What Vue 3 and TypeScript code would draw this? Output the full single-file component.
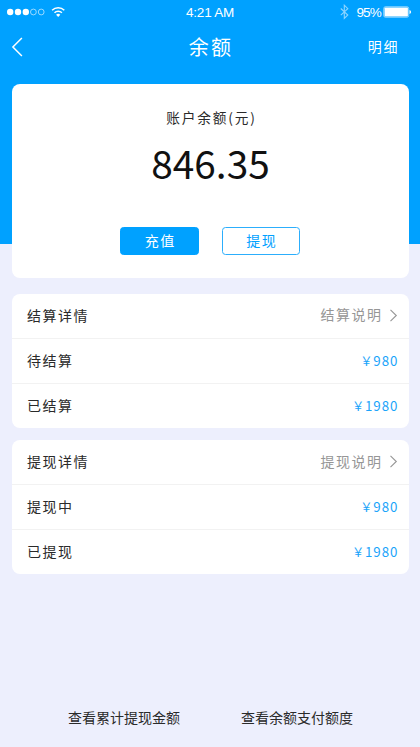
<script setup lang="ts">
interface Row {
  label: string
  amount: string
}
interface Section {
  title: string
  help: string
  rows: Row[]
}

const balance = '846.35'
const sections: Section[] = [
  {
    title: '结算详情',
    help: '结算说明',
    rows: [
      { label: '待结算', amount: '980' },
      { label: '已结算', amount: '1980' },
    ],
  },
  {
    title: '提现详情',
    help: '提现说明',
    rows: [
      { label: '提现中', amount: '980' },
      { label: '已提现', amount: '1980' },
    ],
  },
]
const links: string[] = ['查看累计提现金额', '查看余额支付额度']
</script>

<template>
  <div class="page">
    <div class="status">
      <svg class="signal" width="66" height="14" viewBox="0 0 66 14">
        <g fill="#fff">
          <circle cx="10.2" cy="7" r="3.2" />
          <circle cx="18" cy="7" r="3.2" />
          <circle cx="25.8" cy="7" r="3.2" />
        </g>
        <g fill="none" stroke="#fff" stroke-width="0.7" opacity=".85">
          <circle cx="33.4" cy="7" r="2.9" />
          <circle cx="41.2" cy="7" r="2.9" />
        </g>
        <g fill="none" stroke="#fff" stroke-width="1.5">
          <path d="M52.1 5.2a8.6 8.6 0 0 1 12.2 0" />
          <path d="M54.5 7.8a5.2 5.2 0 0 1 7.4 0" />
        </g>
        <path d="M56.1 9.7a3 3 0 0 1 4.2 0l-2.1 2.3z" fill="#fff" />
      </svg>
      <span class="time">4:21 AM</span>
      <div class="power">
        <svg width="9" height="16" viewBox="0 0 9 16" fill="none" stroke="#fff" stroke-width="1.1" opacity=".55">
          <path d="M.8 4.5l7 6.5-3.5 3.4V1.2l3.5 3.5-7 6.4" />
        </svg>
        <span class="percent">95%</span>
        <svg width="29" height="12" viewBox="0 0 29 12">
          <rect x=".7" y=".7" width="25" height="10.6" rx="1.8" fill="none" stroke="#fff" stroke-width=".8" opacity=".65" />
          <rect x="1.5" y="1.5" width="23.4" height="9" rx=".8" fill="#fff" />
          <path d="M26.5 4.1q1.6.5 1.6 1.9t-1.6 1.9z" fill="#fff" />
        </svg>
      </div>
    </div>

    <header class="nav">
      <svg class="back" width="12" height="20" viewBox="0 0 12 20" fill="none" stroke="#fff" stroke-width="1.5">
        <path d="M10.9 1L1.9 10l9 9" />
      </svg>
      <h1>余额</h1>
      <span class="detail">明细</span>
    </header>

    <section class="card balance">
      <p class="caption">账户余额(元)</p>
      <p class="total">{{ balance }}</p>
      <div class="actions">
        <button class="btn primary">充值</button>
        <button class="btn">提现</button>
      </div>
    </section>

    <section v-for="section in sections" :key="section.title" class="card list">
      <div class="row">
        <span>{{ section.title }}</span>
        <span class="help">
          <span class="help-text">{{ section.help }}</span>
          <svg width="8" height="13" viewBox="0 0 8 13" fill="none" stroke="#969696" stroke-width="1.1">
            <path d="M.5.8l5.8 5.7-5.8 5.7" />
          </svg>
        </span>
      </div>
      <div v-for="row in section.rows" :key="row.label" class="row">
        <span>{{ row.label }}</span>
        <span class="amount"><span class="yen">￥</span>{{ row.amount }}</span>
      </div>
    </section>

    <footer class="links">
      <span v-for="link in links" :key="link">{{ link }}</span>
    </footer>
  </div>
</template>

<style>
body {
  background: #edeffd;
}
</style>

<style scoped>
.page {
  box-sizing: border-box;
  display: flex;
  flex-direction: column;
  height: 747px;
  background: linear-gradient(#00a1ff 244px, #edeffd 244px);
  color: #2a2a2a;
  font-family: 'Noto Sans CJK SC', sans-serif;
  font-size: 14px;
}
.status {
  display: grid;
  grid-template-columns: 1fr auto 1fr;
  align-items: center;
  height: 24px;
  color: #fff;
  font-family: 'Liberation Sans', sans-serif;
  font-size: 13.5px;
}
.signal {
  margin-top: -1px;
}
.time {
  letter-spacing: -0.25px;
}
.power {
  display: flex;
  justify-content: flex-end;
  align-items: center;
  padding-right: 8px;
}
.power svg:first-child {
  margin-right: 1px;
}
.percent {
  margin: 0 2px 0 6px;
  letter-spacing: -0.8px;
}
.nav {
  display: grid;
  grid-template-columns: 1fr auto 1fr;
  align-items: center;
  height: 46px;
  padding: 0 21px 0 11px;
  color: #fff;
}
.nav h1 {
  margin: 0 0 0 12px;
  font-size: 20px;
  font-weight: 400;
  line-height: 30px;
  letter-spacing: 2.3px;
}
.detail {
  justify-self: end;
  margin-top: -2px;
  letter-spacing: 1.6px;
}
.card {
  margin: 0 11.5px;
  background: #fff;
  border-radius: 8px;
}
.balance {
  box-sizing: border-box;
  display: flex;
  flex-direction: column;
  align-items: center;
  height: 194.5px;
  margin-top: 13.5px;
  margin-bottom: 15.5px;
  padding-top: 22px;
}
.caption {
  margin: 0 0 0 3px;
  line-height: 22px;
  font-size: 13.7px;
  letter-spacing: 1.8px;
}
.total {
  margin: 5px 0 0 1px;
  color: #111;
  font-size: 38.8px;
  line-height: 58px;
}
.actions {
  display: flex;
  gap: 23px;
  margin-top: 36.5px;
}
.btn {
  box-sizing: border-box;
  width: 78.5px;
  height: 28px;
  padding: 0 0 2px 2px;
  border: 1px solid #2caefc;
  border-radius: 3.5px;
  background: #fff;
  color: #00a1ff;
  font: inherit;
  line-height: 24px;
  letter-spacing: 1.5px;
}
.primary {
  border-color: #00a1ff;
  background: #00a1ff;
  color: #fff;
}
.list + .list {
  margin-top: 12px;
}
.row {
  box-sizing: border-box;
  display: flex;
  justify-content: space-between;
  align-items: center;
  height: 44.8px;
  padding: 0 10px 2px 15.5px;
  letter-spacing: 1.5px;
}
.row + .row {
  border-top: 1px solid #f2f2f2;
}
.row:first-child {
  height: 44.3px;
}
.row:last-child {
  height: 45.3px;
}
.help {
  display: flex;
  align-items: center;
  gap: 7px;
  padding-right: 2px;
  color: #969696;
}
.help-text {
  margin-top: -1px;
}
.help svg {
  margin: 1px -1px 0 0;
}
.amount {
  padding-top: 1px;
  color: #1ba4fa;
  font-size: 13.3px;
  letter-spacing: 1px;
}
.yen {
  margin-right: -0.3px;
  font-size: 12.3px;
}
.links {
  display: flex;
  justify-content: center;
  gap: 61px;
  margin-top: auto;
  padding: 0 0 19.5px 1px;
  line-height: 22px;
}
</style>
